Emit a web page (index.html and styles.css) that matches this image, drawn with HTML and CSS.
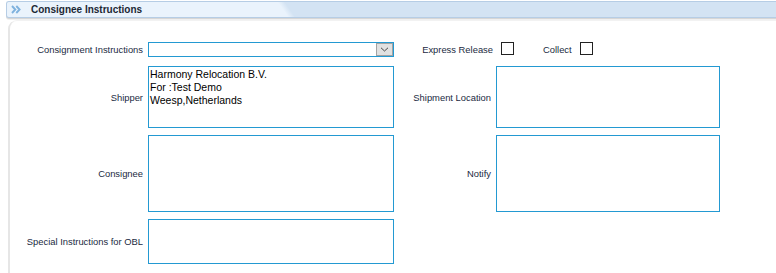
FILE: index.html
```html
<!DOCTYPE html>
<html>
<head>
<meta charset="utf-8">
<title>Consignee Instructions</title>
<link rel="stylesheet" href="styles.css">
</head>
<body>
<div class="page">
  <div class="hdr">
    <svg class="hdr-icon" width="10" height="9" viewBox="0 0 10 9">
      <path d="M1 1 L4.3 4.5 L1 8" fill="none" stroke="#7fb2de" stroke-width="1.9"/>
      <path d="M5.3 1 L8.6 4.5 L5.3 8" fill="none" stroke="#7fb2de" stroke-width="1.9"/>
    </svg>
    <span class="hdr-title">Consignee Instructions</span>
  </div>
  <div class="panel">
    <div class="form">
      <label class="lbl lbl-top">Consignment Instructions</label>
      <div class="select">
        <span class="select-btn">
          <svg width="9" height="5" viewBox="0 0 9 5"><path d="M1 0.8 L4.5 4 L8 0.8" fill="none" stroke="#4a4a4a" stroke-width="1"/></svg>
        </span>
      </div>
      <div class="opts">
        <span class="opt-lbl opt-express">Express Release</span>
        <input type="checkbox" class="chk">
        <span class="opt-lbl opt-collect">Collect</span>
        <input type="checkbox" class="chk">
      </div>

      <label class="lbl">Shipper</label>
      <textarea class="ta" readonly>Harmony Relocation B.V.
For :Test Demo
Weesp,Netherlands</textarea>
      <label class="lbl">Shipment Location</label>
      <textarea class="ta" readonly></textarea>

      <label class="lbl">Consignee</label>
      <textarea class="ta" readonly></textarea>
      <label class="lbl">Notify</label>
      <textarea class="ta" readonly></textarea>

      <label class="lbl">Special Instructions for OBL</label>
      <textarea class="ta" readonly></textarea>
    </div>
  </div>
</div>
</body>
</html>
```

FILE: styles.css
```css
html, body {
  margin: 0;
  padding: 0;
  overflow: hidden;
  background: #ffffff;
}

body {
  font-family: "Liberation Sans", Arial, sans-serif;
}

.page {
  padding: 1px 0 0 6px;
  height: 272px;
  display: flex;
  flex-direction: column;
}

.hdr {
  position: relative;
  overflow: hidden;
  flex: none;
  height: 17px;
  box-sizing: border-box;
  border: 1px solid #b6cde5;
  border-right: none;
  border-radius: 3px 0 0 3px;
  background: #d3e3f3;
  display: flex;
  align-items: center;
  box-shadow: 0 1px 0 #d6d6d6, 0 2px 0 #f0f0f0;
}

.hdr::before {
  content: "";
  position: absolute;
  left: -20px;
  top: 0;
  bottom: 0;
  width: 303px;
  background: linear-gradient(to right, #eaf3fc calc(100% - 7px), #d3e3f3);
  transform: skewX(35deg);
}

.hdr-icon {
  position: relative;
  margin-left: 4px;
  flex: none;
}

.hdr-title {
  position: relative;
  margin-left: 10px;
  font-size: 10px;
  font-weight: bold;
  color: #1c2835;
  white-space: nowrap;
}

.panel {
  flex: 1;
  margin: 2px 0 0 2px;
  border-left: 2px solid #e6e6e6;
  border-top: 1px solid #f2f2f2;
  border-top-left-radius: 9px;
  padding-top: 21px;
}

.form {
  display: grid;
  grid-template-columns: 133px 246px 92px 224px;
  grid-template-rows: 17px 62px 77px 45px;
  column-gap: 5px;
  row-gap: 7px;
}

.lbl {
  align-self: center;
  text-align: right;
  font-size: 9.4px;
  color: #1a2a42;
  white-space: nowrap;
}

.lbl-top {
  align-self: start;
  line-height: 15px;
}

.select {
  align-self: start;
  height: 15px;
  box-sizing: border-box;
  border: 1px solid #2399d2;
  display: flex;
  justify-content: flex-end;
  background: #fff;
}

.select-btn {
  width: 17px;
  height: 13px;
  box-sizing: border-box;
  border: 1px solid #a3a3a3;
  background: #e1e1e1;
  display: flex;
  align-items: center;
  justify-content: center;
}

.opts {
  grid-column: span 2;
  align-self: start;
  display: flex;
  align-items: flex-start;
  height: 15px;
}

.opt-lbl {
  font-size: 9.4px;
  color: #1a2a42;
  line-height: 15px;
  white-space: nowrap;
}

.opt-express {
  width: 94px;
  text-align: right;
}

.opt-collect {
  margin-left: 29px;
}

.chk {
  -webkit-appearance: none;
  appearance: none;
  margin: 0 0 0 8px;
  width: 13px;
  height: 13px;
  box-sizing: border-box;
  border: 1px solid #222;
  background: #fff;
  flex: none;
}

.ta {
  display: block;
  width: 100%;
  height: 100%;
  margin: 0;
  box-sizing: border-box;
  border: 1px solid #2399d2;
  padding: 1px;
  font-family: "Liberation Sans", Arial, sans-serif;
  font-size: 10.5px;
  line-height: 13px;
  color: #000;
  resize: none;
  overflow: hidden;
  outline: none;
  background: #fff;
}
```
